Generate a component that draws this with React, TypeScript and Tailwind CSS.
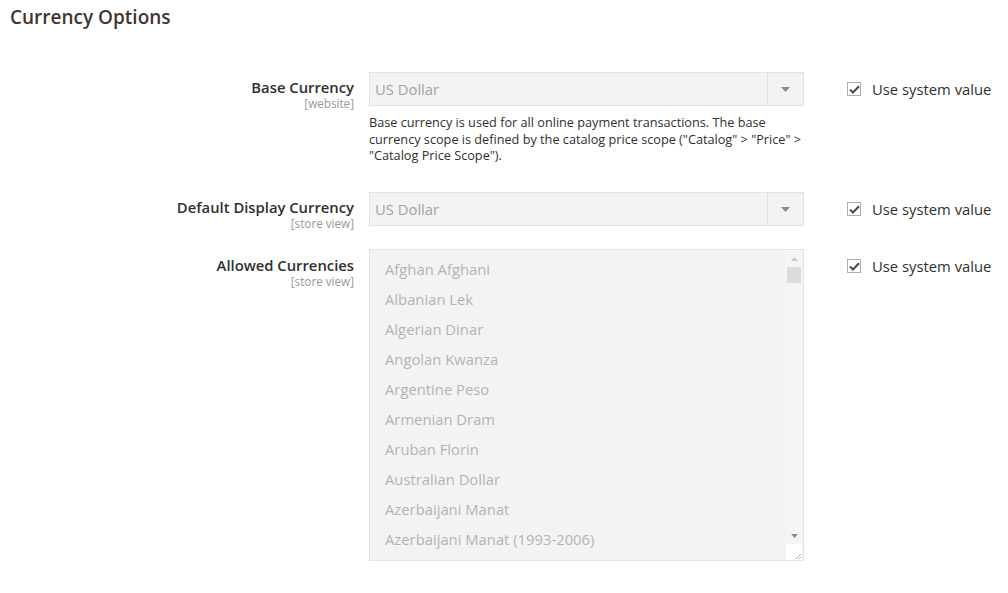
import React from 'react';

const currencies = [
  'Afghan Afghani',
  'Albanian Lek',
  'Algerian Dinar',
  'Angolan Kwanza',
  'Argentine Peso',
  'Armenian Dram',
  'Aruban Florin',
  'Australian Dollar',
  'Azerbaijani Manat',
  'Azerbaijani Manat (1993-2006)',
];

function FieldLabel({ label, scope, top = 'pt-[6px]' }: { label: string; scope: string; top?: string }) {
  return (
    <div className={`w-[344px] h-[34px] shrink-0 text-right ${top}`}>
      <div className="text-[14.8px] leading-[18px] font-semibold text-[#303030]">{label}</div>
      <div className="text-[11.7px] leading-[15px] text-[#999]">{scope}</div>
    </div>
  );
}

function SystemValue() {
  return (
    <label className="ml-[43px] flex items-center h-[34px] gap-[11px] text-[14.8px] text-[#303030]">
      <span className="w-[14px] h-[14px] border border-[#adadad] bg-white flex items-center justify-center">
        <svg width="11" height="9" viewBox="0 0 11 9">
          <path d="M1 4.5 L4 7.5 L10 1.2" fill="none" stroke="#514943" strokeWidth="2" />
        </svg>
      </span>
      Use system value
    </label>
  );
}

function DisabledSelect({ value }: { value: string }) {
  return (
    <div className="flex h-[34px] w-[435px] border border-[#e3e3e3] bg-[#f3f3f3] text-[14.8px] text-[#a3a3a3]">
      <div className="flex-1 flex items-center pl-[5px]">{value}</div>
      <div className="w-[36px] border-l border-[#e3e3e3] flex items-center justify-center">
        <svg width="9" height="5" viewBox="0 0 9 5">
          <path d="M0 0 H9 L4.5 5 Z" fill="#8a8a8a" />
        </svg>
      </div>
    </div>
  );
}

export default function App() {
  return (
    <div className="min-h-[593px] bg-white px-[10px] pt-[5px] font-['Open_Sans',sans-serif]">
      <h2 className="text-[19px] leading-[24px] font-semibold text-[#41362f]">Currency Options</h2>

      <div className="mt-[43px] flex items-start">
        <FieldLabel label="Base Currency" scope="[website]" />
        <div className="ml-[15px]">
          <DisabledSelect value="US Dollar" />
          <p className="mt-[8px] w-[435px] text-[12.7px] leading-[16.7px] text-[#303030]">
            Base currency is used for all online payment transactions. The base currency scope is defined by the
            catalog price scope ("Catalog" &gt; "Price" &gt; "Catalog Price Scope").
          </p>
        </div>
        <SystemValue />
      </div>

      <div className="mt-[28px] flex items-start">
        <FieldLabel label="Default Display Currency" scope="[store view]" />
        <div className="ml-[15px]">
          <DisabledSelect value="US Dollar" />
        </div>
        <SystemValue />
      </div>

      <div className="mt-[23px] flex items-start">
        <FieldLabel label="Allowed Currencies" scope="[store view]" top="pt-[7px]" />
        <div className="ml-[15px] flex h-[312px] w-[435px] border border-[#e3e3e3] bg-[#f3f3f3]">
          <div className="flex-1 pt-[4px] pl-[15px] overflow-hidden">
            {currencies.map((c) => (
              <div key={c} className="h-[30px] flex items-center text-[14.8px] whitespace-nowrap text-[#b3b3b3]">
                {c}
              </div>
            ))}
          </div>
          <div className="w-[16px] mr-[1px] flex flex-col bg-[#f5f5f5]">
            <div className="h-[17px] flex items-center justify-center">
              <svg width="7" height="4" viewBox="0 0 7 4">
                <path d="M0 4 H7 L3.5 0 Z" fill="#c8c8c8" />
              </svg>
            </div>
            <div className="h-[16px] mx-[1px] bg-[#dcdcdc]" />
            <div className="flex-1" />
            <div className="h-[17px] flex items-center justify-center">
              <svg width="7" height="4" viewBox="0 0 7 4">
                <path d="M0 0 H7 L3.5 4 Z" fill="#8a8a8a" />
              </svg>
            </div>
            <div className="h-[16px] bg-white flex items-end justify-end">
              <svg width="8" height="8" viewBox="0 0 8 8">
                <path d="M7 2 L2 7 M7 5 L5 7" stroke="#b0b0b0" strokeWidth="1" />
              </svg>
            </div>
          </div>
        </div>
        <SystemValue />
      </div>
    </div>
  );
}
